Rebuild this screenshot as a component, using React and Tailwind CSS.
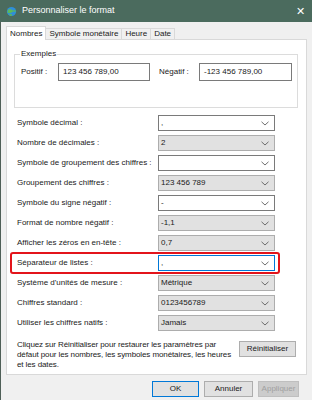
import React from 'react';

const Chevron = () => (
    <svg width="8" height="5" viewBox="0 0 8 5" className="shrink-0">
        <path d="M0.5 0.8 L4 4 L7.5 0.8" fill="none" stroke="#606060" strokeWidth="0.9" />
    </svg>
);

const Combo = ({ value, variant = 'gray' }) => {
    const styles = {
        gray: 'bg-[#e1e1e1] border-[#adadad]',
        white: 'bg-white border-[#7a7a7a]',
        focus: 'bg-white border-[#0078d7]',
    };
    return (
        <div className={`w-[117px] h-[16px] border flex items-center justify-between pl-[2px] pr-[5px] ${styles[variant]}`}>
            <span className="leading-none">{value}</span>
            <Chevron />
        </div>
    );
};

const rows = [
    { label: 'Symbole décimal :', value: ',', variant: 'white' },
    { label: 'Nombre de décimales :', value: '2' },
    { label: 'Symbole de groupement des chiffres :', value: '', variant: 'white' },
    { label: 'Groupement des chiffres :', value: '123 456 789' },
    { label: 'Symbole du signe négatif :', value: '-', variant: 'white' },
    { label: 'Format de nombre négatif :', value: '-1,1' },
    { label: 'Afficher les zéros en en-tête :', value: '0,7' },
    { label: 'Séparateur de listes :', value: ',', variant: 'focus', highlight: true },
    { label: "Système d'unités de mesure :", value: 'Métrique' },
    { label: 'Chiffres standard :', value: '0123456789' },
    { label: 'Utiliser les chiffres natifs :', value: 'Jamais' },
];

const App = () => {
    return (
        <div className="w-[312px] h-[400px] bg-[#f0f0f0] overflow-hidden text-[8px] text-[#1a1a1a] flex flex-col" style={{ fontFamily: '"Liberation Sans", Arial, sans-serif' }}>
            {/* Title bar */}
            <div className="h-[22px] bg-[#4b6b5e] flex items-center pl-[6px] pr-[7px] text-white shrink-0">
                <svg width="11" height="11" viewBox="0 0 12 12" className="shrink-0">
                    <circle cx="6" cy="6" r="5" fill="#2f8fd8" />
                    <path d="M2 4.5 Q4 2.5 6 4 T10 4.2 L10.6 6.5 Q8 5.5 6 7 T1.5 7 Z" fill="#5cb85c" />
                    <path d="M3 9 Q5 8 7 9.5 L6 10.8 Q4 10.8 3 9 Z" fill="#5cb85c" />
                </svg>
                <span className="ml-[5px] text-[9px]">Personnaliser le format</span>
                <span className="ml-auto text-[11px] leading-none font-light">✕</span>
            </div>

            <div className="flex-1 flex flex-col border-l border-[#4f5f57]">
                {/* Tabs */}
                <div className="flex items-end ml-[5px] mt-[4px] h-[13px] relative z-10">
                    <div className="h-[14px] px-[3px] bg-white border border-b-0 border-[#d9d9d9] flex items-center -mb-px">Nombres</div>
                    <div className="h-[11px] px-[3px] border border-b-0 border-l-0 border-[#d9d9d9] flex items-center">Symbole monétaire</div>
                    <div className="h-[11px] px-[3px] border border-b-0 border-l-0 border-[#d9d9d9] flex items-center">Heure</div>
                    <div className="h-[11px] px-[3px] border border-b-0 border-l-0 border-[#d9d9d9] flex items-center">Date</div>
                </div>

                {/* Panel */}
                <div className="ml-[5px] w-[301px] h-[336px] bg-white border border-[#d9d9d9] flex flex-col">
                    {/* Exemples group */}
                    <div className="mt-[14px] ml-[7px] w-[284px] h-[54px] border border-[#dcdcdc] relative flex items-start pt-[8px] pl-[6px]">
                        <span className="absolute -top-[6px] left-[5px] bg-white px-[1px] text-[8px] leading-[10px]">Exemples</span>
                        <div className="flex items-center">
                            <span className="w-[37px]">Positif :</span>
                            <div className="w-[92px] h-[18px] border border-[#7a7a7a] flex items-center pl-[4px]">123 456 789,00</div>
                            <span className="ml-[9px] w-[40px]">Négatif :</span>
                            <div className="w-[93px] h-[18px] border border-[#7a7a7a] flex items-center pl-[4px]">-123 456 789,00</div>
                        </div>
                    </div>

                    {/* Settings rows */}
                    <div className="mt-[7px] flex flex-col gap-[4px]">
                        {rows.map((row) => (
                            <div
                                key={row.label}
                                className={`flex items-center h-[16px] ${row.highlight ? 'relative' : ''}`}
                            >
                                {row.highlight && (
                                    <div className="absolute left-[3px] top-[-3px] w-[270px] h-[22px] border-2 border-[#e3141b] rounded-[3px]" />
                                )}
                                <span className="w-[151px] pl-[10px]">{row.label}</span>
                                <Combo value={row.value} variant={row.variant} />
                            </div>
                        ))}
                    </div>

                    {/* Reset */}
                    <div className="mt-[9px] flex items-start pl-[10px]">
                        <p className="w-[220px] leading-[10px] tracking-[-0.1px]">
                            Cliquez sur Réinitialiser pour restaurer les paramètres par défaut pour les nombres, les symboles monétaires, les heures et les dates.
                        </p>
                        <div className="ml-[2px] mt-[1px] w-[57px] h-[16px] bg-[#e1e1e1] border border-[#adadad] flex items-center justify-center">Réinitialiser</div>
                    </div>
                </div>

                {/* Dialog buttons */}
                <div className="flex mt-[6px] ml-[151px] gap-[5px]">
                    <div className="w-[47px] h-[16px] bg-[#e1e1e1] border border-[#0078d7] flex items-center justify-center">OK</div>
                    <div className="w-[49px] h-[16px] bg-[#e1e1e1] border border-[#adadad] flex items-center justify-center">Annuler</div>
                    <div className="w-[41px] h-[16px] bg-[#cccccc] border border-[#bfbfbf] text-[#a0a0a0] flex items-center justify-center">Appliquer</div>
                </div>
            </div>
        </div>
    );
};

export default App;
